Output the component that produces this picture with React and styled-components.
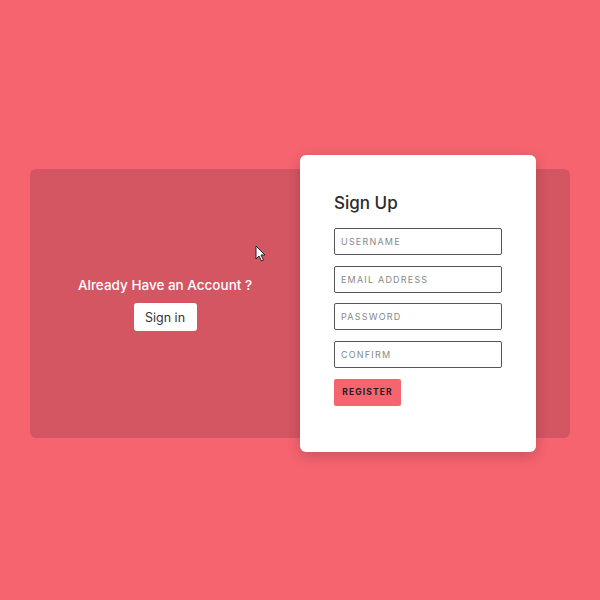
import React from "react";
import styled, { createGlobalStyle } from "styled-components";

const Global = createGlobalStyle`
  html, body { margin: 0; padding: 0; }
  body {
    background: #f5646f;
    font-family: "Inter", "Noto Sans", sans-serif;
    width: 600px; height: 600px; overflow: hidden;
  }
`;

const Page = styled.div`
  width: 600px;
  height: 600px;
  display: flex;
  align-items: center;
  justify-content: center;
  position: relative;
`;

const Panel = styled.div`
  position: relative;
  width: 540px;
  height: 269px;
  margin-top: 7px;
  background: #d35662;
  border-radius: 6px;
  display: grid;
  grid-template-columns: 270px 270px;
`;

const Side = styled.div`
  display: flex;
  flex-direction: column;
  align-items: center;
  justify-content: center;
  gap: 10px;
  padding-top: 1px;
`;

const SideTitle = styled.h3`
  margin: 0;
  color: #fff;
  font-size: 13.5px;
  font-weight: 500;
`;

const GhostButton = styled.button`
  width: 63px;
  height: 28px;
  border: none;
  border-radius: 3px;
  background: #fff;
  color: #333;
  font-family: inherit;
  font-size: 12.5px;
  padding: 0;
`;

const Card = styled.div`
  position: absolute;
  left: 270px;
  top: -14px;
  width: 236px;
  height: 297px;
  box-sizing: border-box;
  background: #fff;
  border-radius: 6px;
  box-shadow: 0 4px 14px rgba(0, 0, 0, 0.18);
  padding: 36px 34px 0 34px;
  display: flex;
  flex-direction: column;
`;

const Title = styled.h2`
  margin: 0 0 13px 0;
  font-size: 17px;
  font-weight: 500;
  color: #2b2b2b;
  line-height: 24px;
`;

const Field = styled.input`
  box-sizing: border-box;
  width: 168px;
  height: 27px;
  border: 1.5px solid #555;
  border-radius: 2px;
  padding: 0 0 0 6px;
  margin-bottom: 10.7px;
  font-family: inherit;
  font-size: 9px;
  letter-spacing: 1.2px;
  outline: none;
  &::placeholder { color: #888; }
`;

const Register = styled.button`
  width: 67px;
  height: 27px;
  border: none;
  border-radius: 2px;
  background: #f5646f;
  color: #2a1a1c;
  font-family: inherit;
  font-weight: 700;
  font-size: 8.5px;
  letter-spacing: 1.1px;
  padding: 0;
`;

const Cursor = styled.svg`
  position: absolute;
  left: 255px;
  top: 245px;
`;

export default function App() {
  return (
    <>
      <Global />
      <Page>
        <Panel>
          <Side>
            <SideTitle>Already Have an Account ?</SideTitle>
            <GhostButton>Sign in</GhostButton>
          </Side>
          <div />
          <Card>
            <Title>Sign Up</Title>
            <Field placeholder="USERNAME" />
            <Field placeholder="EMAIL ADDRESS" />
            <Field placeholder="PASSWORD" />
            <Field placeholder="CONFIRM" />
            <Register>REGISTER</Register>
          </Card>
        </Panel>
        <Cursor width="12" height="18" viewBox="0 0 12 18">
          <path d="M1 1 L1 14 L4 11 L6.5 16 L8.5 15 L6 10 L10 10 Z" fill="#fff" stroke="#222" strokeWidth="1" strokeLinejoin="round" />
        </Cursor>
      </Page>
    </>
  );
}
